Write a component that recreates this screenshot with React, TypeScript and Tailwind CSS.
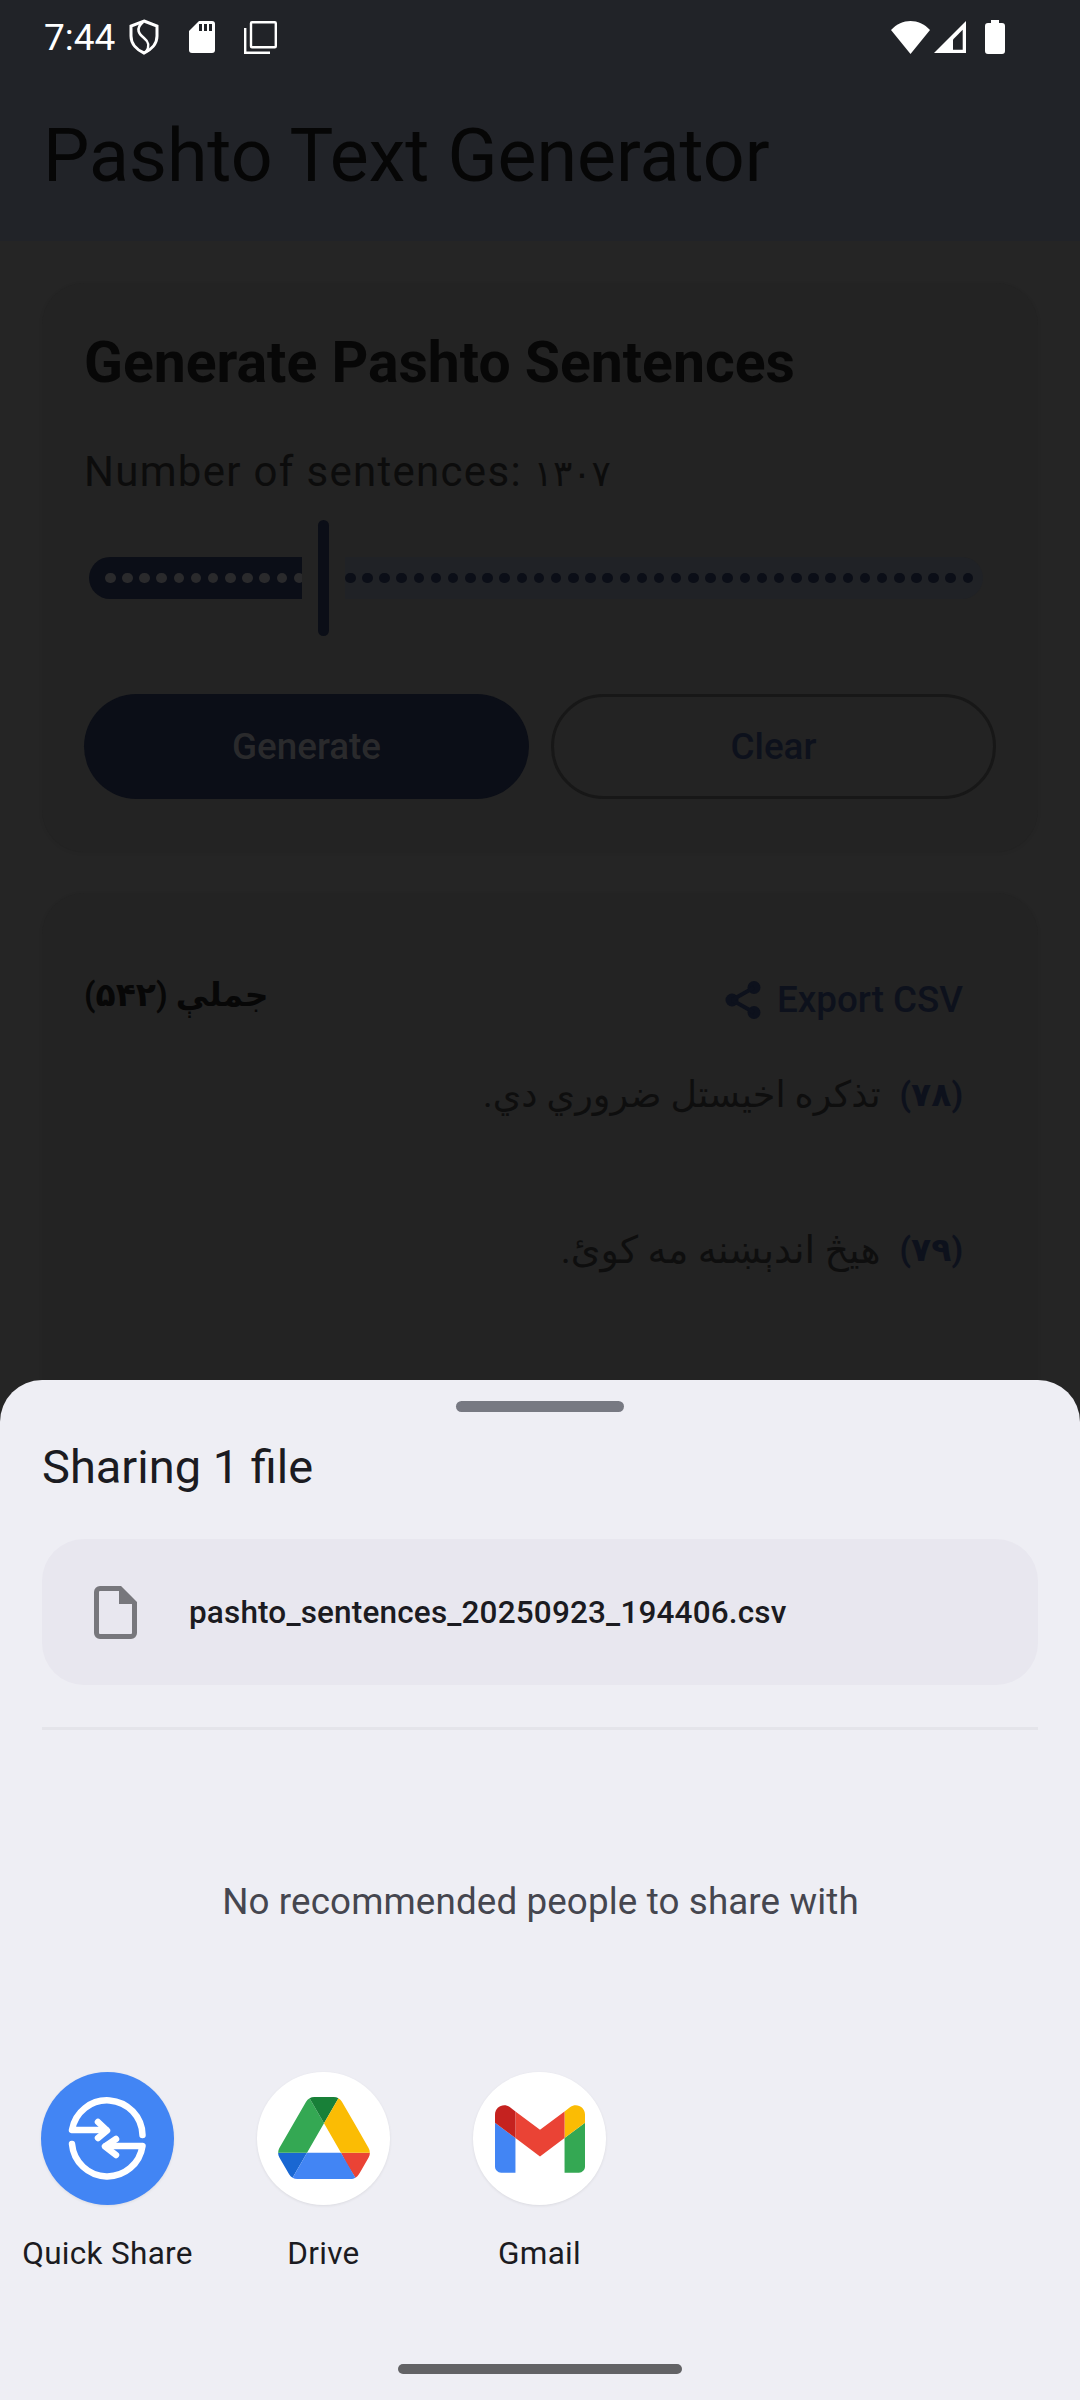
const dots = (n: number) => Array.from({ length: n }, (_, i) => i);

const Shield = () => (
  <svg width="30" height="36" viewBox="0 0 30 36" fill="none" stroke="#fff" strokeWidth="3">
    <path d="M15 2 L28 7 V17 C28 25 22 31 15 34 C8 31 2 25 2 17 V7 Z" />
    <path d="M14 3 C6 10 10 15 15 19 C20 23 21 27 17 33" strokeWidth="2.6" />
  </svg>
);

const SdCard = () => (
  <svg width="26" height="32" viewBox="0 0 26 32" fill="#fff">
    <path d="M10 0 H23 a3 3 0 0 1 3 3 V29 a3 3 0 0 1 -3 3 H3 a3 3 0 0 1 -3 -3 V10 Z" />
    <rect x="10" y="3" width="3" height="7" fill="#212328" />
    <rect x="15" y="3" width="3" height="7" fill="#212328" />
    <rect x="20" y="3" width="3" height="7" fill="#212328" />
  </svg>
);

const Copies = () => (
  <svg width="33" height="33" viewBox="0 0 33 33" fill="none" stroke="#fff" strokeWidth="2.4">
    <rect x="7" y="1.2" width="24.8" height="25" rx="1" />
    <path d="M1.2 7 V31.8 H26" />
  </svg>
);

const Wifi = () => (
  <svg width="39" height="33" viewBox="0 0 39 33" fill="#fff">
    <path d="M0 9 C11 -3 28 -3 39 9 L19.5 33 Z" />
  </svg>
);

const Signal = () => (
  <svg width="32" height="32" viewBox="0 0 32 32">
    <path d="M32 0 V32 H0 Z" fill="#fff" />
    <path d="M19 18.5 L28.7 8.8 V28.7 H19 Z" fill="#212328" />
  </svg>
);

const Battery = () => (
  <svg width="20" height="34" viewBox="0 0 20 34" fill="#fff">
    <path d="M6 0 H14 V3 H17 a3 3 0 0 1 3 3 V31 a3 3 0 0 1 -3 3 H3 a3 3 0 0 1 -3 -3 V6 a3 3 0 0 1 3 -3 H6 Z" />
  </svg>
);

const ShareGlyph = () => (
  <svg width="36" height="38" viewBox="0 0 36 38" fill="#0d111c">
    <circle cx="29" cy="6.5" r="6.5" />
    <circle cx="29" cy="31.5" r="6.5" />
    <circle cx="7" cy="19" r="6.5" />
    <path d="M7 19 L29 6.5 M7 19 L29 31.5" stroke="#0d111c" strokeWidth="4" />
  </svg>
);

const FileGlyph = () => (
  <svg width="43" height="53" viewBox="0 0 43 53" fill="none">
    <path
      d="M6 2.5 H26 L40.5 17 V47 a3.5 3.5 0 0 1 -3.5 3.5 H6 a3.5 3.5 0 0 1 -3.5 -3.5 V6 A3.5 3.5 0 0 1 6 2.5 Z"
      stroke="#77777c"
      strokeWidth="5"
    />
    <path d="M25 2 L41 18 H25 Z" fill="#77777c" />
  </svg>
);

const QuickShareIcon = () => (
  <svg width="133" height="133" viewBox="0 0 133 133" fill="none" stroke="#fff" strokeWidth="6.5" strokeLinecap="round" strokeLinejoin="round">
    <path d="M101.5 63 A35.5 35.5 0 0 0 31 58 H65" />
    <path d="M57 50 L66 58.5 L57 66" />
    <path d="M31 72 A35.5 35.5 0 0 0 101.5 74 H65" />
    <path d="M75 67 L64 74.5 L75 83" />
  </svg>
);

const DriveIcon = () => (
  <svg className="-translate-y-px" width="92" height="82" viewBox="0 0 87.3 78">
    <path d="m6.6 66.85 3.85 6.65c.8 1.4 1.95 2.5 3.3 3.3l13.75-23.8h-27.5c0 1.55.4 3.1 1.2 4.5z" fill="#1967d2" />
    <path d="m43.65 25-13.75-23.8c-1.35.8-2.5 1.9-3.3 3.3l-25.4 44a9.06 9.06 0 0 0 -1.2 4.5h27.5z" fill="#34a853" />
    <path d="m73.55 76.8c1.35-.8 2.5-1.9 3.3-3.3l1.6-2.75 7.65-13.25c.8-1.4 1.2-2.95 1.2-4.5h-27.502l5.852 11.5z" fill="#ea4335" />
    <path d="m43.65 25 13.75-23.8c-1.35-.8-2.9-1.2-4.5-1.2h-18.5c-1.6 0-3.15.45-4.5 1.2z" fill="#188038" />
    <path d="m59.8 53h-32.3l-13.75 23.8c1.35.8 2.9 1.2 4.5 1.2h50.8c1.6 0 3.15-.45 4.5-1.2z" fill="#4285f4" />
    <path d="m73.4 26.5-12.7-22c-.8-1.4-1.95-2.5-3.3-3.3l-13.75 23.8 16.15 28h27.45c0-1.55-.4-3.1-1.2-4.5z" fill="#fbbc04" />
  </svg>
);

const GmailIcon = () => (
  <svg width="90" height="68" viewBox="52 42 88 66">
    <path fill="#4285f4" d="M58 108h14V74L52 59v43c0 3.32 2.69 6 6 6" />
    <path fill="#34a853" d="M120 108h14c3.32 0 6-2.69 6-6V59l-20 15" />
    <path fill="#fbbc04" d="M120 48v26l20-15v-8c0-7.42-8.47-11.65-14.4-7.2" />
    <path fill="#ea4335" d="M72 74V48l24 18 24-18v26L96 92" />
    <path fill="#c5221f" d="M52 51v8l20 15V48l-5.6-4.2c-5.94-4.45-14.4-.22-14.4 7.2" />
  </svg>
);

const targets = [
  { name: "Quick Share", bg: "bg-[#4285f4]", icon: <QuickShareIcon /> },
  { name: "Drive", bg: "bg-white", icon: <DriveIcon /> },
  { name: "Gmail", bg: "bg-white", icon: <GmailIcon /> },
];

export default function App() {
  return (
    <div className="relative h-[2400px] w-[1080px] overflow-hidden bg-[#252525] font-['Roboto','DejaVu_Sans',sans-serif]">
      <header className="h-[241px] bg-[#212328]">
        <div className="flex h-[74px] items-center pl-[44px] pr-[75px] text-white">
          <span className="text-[37px] leading-none">7:44</span>
          <div className="ml-[14px] flex items-center gap-[30px]">
            <Shield />
            <div className="flex items-center gap-[29px]">
              <SdCard />
              <Copies />
            </div>
          </div>
          <div className="ml-auto flex items-center">
            <Wifi />
            <div className="ml-[4px]">
              <Signal />
            </div>
            <div className="ml-[19px]">
              <Battery />
            </div>
          </div>
        </div>
        <h1 className="mt-[32px] pl-[43px] text-[73.5px] leading-[100px] text-[#060606]">Pashto Text Generator</h1>
      </header>

      <main className="flex flex-col gap-[41px] px-[42px] pt-[42px]">
        <section className="h-[569px] rounded-[42px] bg-[#232323] px-[42px] pt-[43px] shadow-[0_1px_4px_rgba(0,0,0,0.06)]">
          <h2 className="text-[57.1px] font-bold leading-[74px] text-[#070707]">Generate Pashto Sentences</h2>
          <p className="mt-[47px] text-[42px] leading-[50px] tracking-[1.3px] text-[#0c0c0c]">
            Number of sentences: <span className="text-[36px] tracking-[-1.5px]">۱۳۰۷</span>
          </p>
          <div className="mt-[21px] flex h-[116px] items-center pl-[5px]">
            <div className="flex h-[42px] w-[213px] items-center gap-[6.67px] overflow-hidden rounded-l-full rounded-r-[5px] bg-[#0b0e17] pl-[16px]">
              {dots(12).map((i) => (
                <span key={i} className="size-[10.5px] shrink-0 rounded-full bg-[#2a2a2c]" />
              ))}
            </div>
            <div className="ml-[16px] h-[116px] w-[11px] rounded-full bg-[#0b0e17]" />
            <div className="ml-[16px] flex h-[42px] w-[638px] items-center gap-[6.67px] rounded-r-full bg-[#202226]">
              {dots(37).map((i) => (
                <span key={i} className="size-[10.5px] shrink-0 rounded-full bg-[#0b0e17]" />
              ))}
            </div>
          </div>
          <div className="mt-[58px] flex gap-[22px]">
            <button className="h-[105px] w-[445px] rounded-full bg-[#0b0e17] text-[36.75px] font-medium text-[#2a2a2c]">Generate</button>
            <button className="h-[105px] w-[445px] rounded-full border-[3px] border-[#171717] text-[36.75px] font-medium text-[#0d111c]">Clear</button>
          </div>
        </section>

        <section className="h-[600px] rounded-[42px] bg-[#232323] pl-[42px] pr-[75px] pt-[74px] shadow-[0_1px_4px_rgba(0,0,0,0.06)]">
          <div className="flex items-start justify-between">
            <h3 className="-mt-[2px] text-[33px] font-bold leading-[60px] text-[#070707]" dir="rtl">
              جملې (۵۴۲)
            </h3>
            <div className="mt-[5px] flex items-center gap-[16px]">
              <ShareGlyph />
              <span className="text-[36.75px] font-medium text-[#0d111c]">Export CSV</span>
            </div>
          </div>
          <div className="mt-[43px] flex flex-col gap-[105px]" dir="rtl">
            <p className="flex h-[50px] items-center gap-[19px] text-[36.5px] leading-[50px] text-[#0e0e0e]">
              <span className="text-[33px] font-bold text-[#0d111c]">(۷۸)</span>
              <span>تذکره اخیستل ضروري دي.</span>
            </p>
            <p className="flex h-[50px] items-center gap-[19px] text-[38px] leading-[50px] text-[#0e0e0e]">
              <span className="text-[33px] font-bold text-[#0d111c]">(۷۹)</span>
              <span>هیڅ اندېښنه مه کوئ.</span>
            </p>
          </div>
        </section>
      </main>

      <div className="absolute inset-x-0 bottom-0 flex h-[1020px] flex-col rounded-t-[42px] bg-[#eeeef4]">
        <div className="mx-auto mt-[21px] h-[11px] w-[168px] rounded-full bg-[#777982]" />
        <h4 className="ml-[42px] mt-[28px] text-[47px] leading-[54px] text-[#1b1b21]">Sharing 1 file</h4>
        <div className="mx-[42px] mt-[45px] flex h-[146px] items-center gap-[52px] rounded-[42px] bg-[#e8e7ef] pl-[52px]">
          <FileGlyph />
          <span className="pt-[2px] text-[31.5px] font-medium tracking-[0.17px] text-[#1b1b21]">pashto_sentences_20250923_194406.csv</span>
        </div>
        <div className="mx-[42px] mt-[42px] h-[3px] bg-[#e4e4ea]" />
        <p className="mt-[148px] pl-[1px] text-center text-[36.75px] leading-[48px] tracking-[0.13px] text-[#45464f]">No recommended people to share with</p>
        <div className="ml-[-0.5px] mt-[146px] grid grid-cols-[216px_216px_216px]">
          {targets.map((t) => (
            <div key={t.name} className="flex flex-col items-center">
              <div className={`flex size-[133px] items-center justify-center rounded-full shadow-[0_1px_3px_rgba(0,0,0,0.08)] ${t.bg}`}>
                {t.icon}
              </div>
              <span className="mt-[29px] text-[31.5px] leading-[40px] tracking-[0.3px] text-[#1b1b21]">{t.name}</span>
            </div>
          ))}
        </div>
        <div className="mx-auto mb-[26px] mt-auto h-[10px] w-[284px] rounded-full bg-[#626265]" />
      </div>
    </div>
  );
}
